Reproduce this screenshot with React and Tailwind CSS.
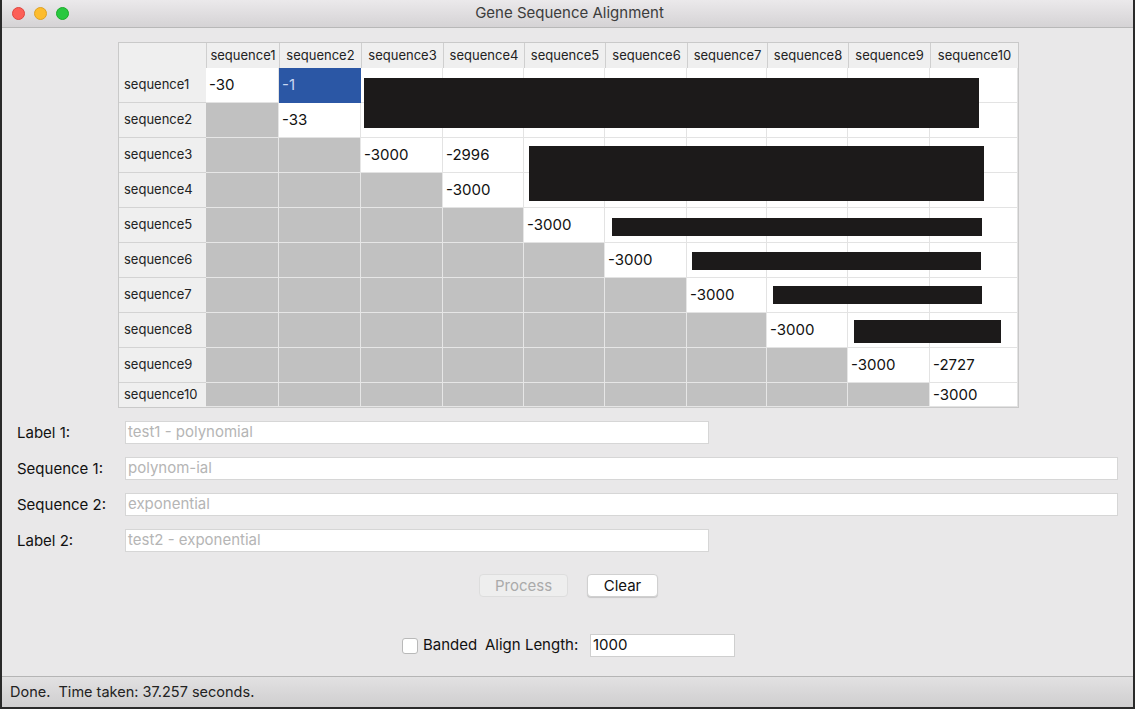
import React from 'react';

const cols = ['sequence1', 'sequence2', 'sequence3', 'sequence4', 'sequence5', 'sequence6', 'sequence7', 'sequence8', 'sequence9', 'sequence10'];

// values in upper triangle; null = empty white cell
const rows = [
  { name: 'sequence1', h: 'h-[35px]', cells: { 0: '-30', 1: '-1' } },
  { name: 'sequence2', h: 'h-[35px]', cells: { 1: '-33' } },
  { name: 'sequence3', h: 'h-[35px]', cells: { 2: '-3000', 3: '-2996' } },
  { name: 'sequence4', h: 'h-[35px]', cells: { 3: '-3000' } },
  { name: 'sequence5', h: 'h-[35px]', cells: { 4: '-3000' } },
  { name: 'sequence6', h: 'h-[35px]', cells: { 5: '-3000' } },
  { name: 'sequence7', h: 'h-[35px]', cells: { 6: '-3000' } },
  { name: 'sequence8', h: 'h-[35px]', cells: { 7: '-3000' } },
  { name: 'sequence9', h: 'h-[35px]', cells: { 8: '-3000', 9: '-2727' } },
  { name: 'sequence10', h: 'h-[24px]', cells: { 9: '-3000' } },
];

// redaction boxes laid over the table
const boxes = [
  'left-[245px] top-[35px] w-[615px] h-[50px]',
  'left-[410px] top-[103px] w-[455px] h-[55px]',
  'left-[493px] top-[175px] w-[370px] h-[18px]',
  'left-[573px] top-[209px] w-[289px] h-[18px]',
  'left-[654px] top-[243px] w-[209px] h-[18px]',
  'left-[735px] top-[277px] w-[147px] h-[23px]',
];

const Grid = () => (
  <div className="relative ml-[116px] mt-[14px] w-[901px] border border-[#c9c9c9] bg-white">
    <div className="grid grid-cols-[87px_73px_82px_82px_81px_81px_82px_80px_81px_82px_88px]">
      <div className="h-[25px] bg-[#efefef]" />
      {cols.map((c) => (
        <div key={c} className="h-[25px] bg-[#efefef] border-l border-[#cfcfcf] flex items-center justify-center text-[13px] text-[#222] overflow-hidden whitespace-nowrap">
          {c}
        </div>
      ))}
      {rows.map((r, ri) => (
        <React.Fragment key={r.name}>
          <div className={`${r.h} bg-[#efefef] flex items-center pl-[5px] text-[13px] text-[#222] ${ri < rows.length - 1 ? 'border-b border-[#d3d3d3]' : ''}`}>
            {r.name}
          </div>
          {cols.map((c, ci) => {
            const lower = ci < ri;
            const selected = ri === 0 && ci === 1;
            const val = r.cells[ci];
            let cls = 'bg-white border-r border-b border-[#e3e3e3] text-[#111]';
            if (lower) cls = 'bg-[#c1c1c1] border-r border-b border-[#e6e6e6]';
            if (selected) cls = 'bg-[#2b57a5] text-[#c9d8f3] border-r border-b border-[#2b57a5]';
            return (
              <div key={c} className={`${r.h} ${cls} flex items-center pl-[3px] pt-[1px] text-[15px]`}>
                {val}
              </div>
            );
          })}
        </React.Fragment>
      ))}
    </div>
    {boxes.map((b) => (
      <div key={b} className={`absolute bg-[#1c1a1a] ${b}`} />
    ))}
  </div>
);

const Field = ({ label, value, wide }) => (
  <div className="flex items-center h-[23px]">
    <div className="w-[123px] pl-[15px] pt-[2px] text-[15px] text-[#111]">{label}</div>
    <div className={`${wide ? 'w-[993px]' : 'w-[584px]'} h-[23px] bg-white border border-[#d6d6d6] flex items-center pl-[2px] text-[15px] text-[#b5b5b5]`}>
      {value}
    </div>
  </div>
);

export default function App() {
  return (
    <div className="w-[1135px] h-[709px] flex flex-col bg-[#e9e8e9] border-x-2 border-[#2a2a2a] overflow-hidden" style={{ fontFamily: 'Inter, "Liberation Sans", sans-serif' }}>
      {/* title bar */}
      <div className="h-[28px] shrink-0 flex items-center bg-gradient-to-b from-[#ebe9eb] to-[#d5d3d5] border-b border-[#b8b8b8]">
        <div className="flex items-center gap-[9px] pl-[10px]">
          <span className="w-[13px] h-[13px] rounded-full bg-[#fc5f57] border border-[#e0443e]" />
          <span className="w-[13px] h-[13px] rounded-full bg-[#fdbc2e] border border-[#dea123]" />
          <span className="w-[13px] h-[13px] rounded-full bg-[#28c840] border border-[#1aab29]" />
        </div>
        <div className="flex-1 text-center text-[15px] text-[#3c3c3c] pr-[63px]">Gene Sequence Alignment</div>
      </div>

      {/* body */}
      <div className="flex-1 flex flex-col">
        <Grid />

        <div className="flex flex-col gap-[13px] mt-[13px]">
          <Field label="Label 1:" value="test1 - polynomial" />
          <Field label="Sequence 1:" value="polynom-ial" wide />
          <Field label="Sequence 2:" value="exponential" wide />
          <Field label="Label 2:" value="test2 - exponential" />
        </div>

        <div className="flex justify-center gap-[19px] mt-[22px] pl-[2px]">
          <button className="w-[89px] h-[23px] rounded-[4px] bg-[#eeeeee] border border-[#dddddd] text-[15px] text-[#aaaaaa]">Process</button>
          <button className="w-[71px] h-[23px] rounded-[4px] bg-white border border-[#d0d0d0] shadow-[0_1px_1px_rgba(0,0,0,0.15)] text-[15px] text-[#111]">Clear</button>
        </div>

        <div className="flex items-center mt-[37px] ml-[400px] h-[23px]">
          <span className="w-[16px] h-[16px] rounded-[3px] bg-white border border-[#b9b9b9]" />
          <span className="ml-[5px] w-[62px] text-[15px] text-[#111]">Banded</span>
          <span className="w-[105px] text-[15px] text-[#111]">Align Length:</span>
          <div className="w-[145px] h-[23px] bg-white border border-[#cfcfcf] flex items-center pl-[2px] text-[15px] text-[#111]">1000</div>
        </div>
      </div>

      {/* status bar */}
      <div className="h-[33px] shrink-0 flex items-center pl-[8px] bg-gradient-to-b from-[#e2e1e2] to-[#cfcecf] border-t border-[#b5b5b5] border-b-2 border-b-[#2a2a2a] text-[14.5px] text-[#222]">
        Done.&nbsp; Time taken: 37.257 seconds.
      </div>
    </div>
  );
}
